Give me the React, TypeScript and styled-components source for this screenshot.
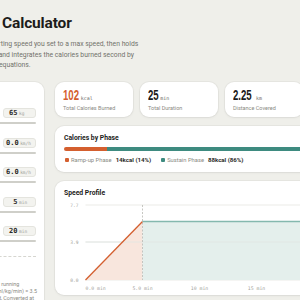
import styled, { createGlobalStyle } from "styled-components";

const GlobalStyle = createGlobalStyle`
    * { box-sizing: border-box; }
    html, body { margin: 0; padding: 0; background: #efefea; }
    body {
        font-family: Roboto, "Noto Sans", sans-serif;
        color: #1c1c1a;
        overflow: hidden;
    }
`;

const ORANGE = "#d45f2f";
const TEAL = "#3e8b80";

const Page = styled.div`
    display: flex;
    justify-content: center;
    width: 100vw;
`;

const Shell = styled.div`
    flex: none;
    width: 476px;
`;

const Header = styled.header`
    padding-top: 2px;
`;

const Eyebrow = styled.div`
    font-size: 5.5px;
    line-height: 7px;
    letter-spacing: 0.14em;
    text-transform: uppercase;
    color: #a3a39c;
`;

const Title = styled.h1`
    margin: 3px 0 0;
    font-size: 15.5px;
    line-height: 22px;
    font-weight: 700;
    letter-spacing: -0.01em;
`;

const Lead = styled.p`
    margin: 5px 0 0;
    font-size: 6.8px;
    line-height: 10.5px;
    color: #72726b;
`;

const Main = styled.div`
    display: grid;
    grid-template-columns: 132px 1fr;
    gap: 11px;
    margin-top: 11.5px;
`;

const Card = styled.section`
    background: #ffffff;
    border-radius: 9px;
    box-shadow: 0 0 0 1px rgba(0, 0, 0, 0.035), 0 1px 3px rgba(0, 0, 0, 0.05);
`;

const Panel = styled(Card)`
    display: flex;
    flex-direction: column;
    padding: 8px 8px 12px;
`;

const PanelTitle = styled.h2`
    margin: 0 0 9px;
    font-size: 7px;
    line-height: 9px;
    font-weight: 700;
`;

const Fields = styled.div`
    display: flex;
    flex-direction: column;
    gap: 13.5px;
`;

const Field = styled.div`
    display: flex;
    flex-direction: column;
    gap: 4px;
`;

const FieldRow = styled.div`
    display: flex;
    align-items: center;
    justify-content: space-between;
    height: 10px;
`;

const FieldLabel = styled.span`
    font-size: 6px;
    color: #55554f;
`;

const ValueBox = styled.div`
    display: flex;
    align-items: baseline;
    justify-content: flex-end;
    width: 33px;
    height: 10px;
    padding: 0 4px;
    line-height: 9px;
    background: #f3f3ef;
    border: 1px solid #e4e4de;
    border-radius: 3px;
    font-family: "DejaVu Sans Mono", "Liberation Mono", monospace;
`;

const Value = styled.span`
    font-size: 7px;
    font-weight: 700;
    color: #2a2a27;
`;

const Unit = styled.span`
    width: 12px;
    margin-left: 1.5px;
    font-size: 4.5px;
    color: #a0a09a;
`;

const Track = styled.div`
    position: relative;
    height: 2px;
    border-radius: 1px;
    background: #cfcfc9;
`;

const TrackFill = styled.div`
    height: 100%;
    border-radius: 1px;
    background: #8f8f88;
`;

const Thumb = styled.div`
    position: absolute;
    top: -3px;
    width: 8px;
    height: 8px;
    margin-left: -4px;
    border-radius: 50%;
    background: #ffffff;
    border: 1.5px solid #3a3a36;
`;

const Divider = styled.div`
    height: 0;
    margin-top: 14px;
    border-top: 1px dashed #d6d6d0;
`;

const Notes = styled.div`
    display: flex;
    flex-direction: column;
    margin-top: 12px;
`;

const NoteTitle = styled.div`
    font-size: 6px;
    line-height: 8px;
    font-weight: 700;
    color: #55554f;
    margin-bottom: 4px;
`;

const NoteLine = styled.div`
    font-size: 5.4px;
    line-height: 7px;
    white-space: nowrap;
    color: #8a8a83;
`;

const Column = styled.div`
    display: flex;
    flex-direction: column;
    gap: 8.5px;
`;

const Stats = styled.div`
    display: grid;
    grid-template-columns: repeat(4, 1fr);
    gap: 7px;
`;

const StatCard = styled(Card)`
    height: 35px;
    padding: 6px 8px 0;
`;

const StatValue = styled.div`
    display: flex;
    align-items: baseline;
    gap: 1.5px;
    line-height: 14px;
`;

const Figure = styled.span`
    display: inline-block;
    white-space: nowrap;
`;

const Big = styled.span<{ $accent?: boolean }>`
    display: inline-block;
    font-family: "Liberation Sans", Arial, sans-serif;
    font-size: 15.5px;
    font-weight: 700;
    transform: scaleX(0.62);
    transform-origin: left center;
    color: ${(p) => (p.$accent ? ORANGE : "#1c1c1a")};
`;

const Small = styled.span`
    font-family: "DejaVu Sans Mono", "Liberation Mono", monospace;
    font-size: 5px;
    color: #6c6c66;
`;

const StatLabel = styled.div`
    font-size: 5.5px;
    line-height: 7px;
    color: #8a8a83;
`;

const BlockCard = styled(Card)`
    padding: 8px 9px;
`;

const BlockTitle = styled.h3`
    margin: 0;
    font-size: 6.8px;
    line-height: 9px;
    font-weight: 700;
`;

const Bar = styled.div`
    display: flex;
    height: 4.5px;
    margin-top: 4px;
    border-radius: 2px;
    overflow: hidden;
`;

const BarPart = styled.div<{ $color: string }>`
    background: ${(p) => p.$color};
`;

const Legend = styled.div`
    display: flex;
    align-items: center;
    gap: 9px;
    margin-top: 5px;
    line-height: 8px;
`;

const LegendItem = styled.div`
    display: flex;
    align-items: center;
    gap: 2.5px;
`;

const Swatch = styled.span<{ $color: string }>`
    width: 3.5px;
    height: 3.5px;
    margin-left: 1px;
    border-radius: 1px;
    background: ${(p) => p.$color};
`;

const LegendName = styled.span`
    font-size: 5.8px;
    color: #8a8a83;
`;

const LegendValue = styled.span`
    margin-left: 1.5px;
    font-size: 6.1px;
    font-weight: 700;
    color: #2a2a27;
`;

const ChartCard = styled(Card)`
    padding: 8px 9px 2px;
`;

const Chart = styled.svg`
    display: block;
    width: 100%;
    height: 93px;
    margin-top: 2px;
    font-family: "DejaVu Sans Mono", "Liberation Mono", monospace;
`;

const fields = [
    { label: "Body weight", value: "65", unit: "kg", pct: 28 },
    { label: "Start speed", value: "0.0", unit: "km/h", pct: 0 },
    { label: "Max speed", value: "6.0", unit: "km/h", pct: 24 },
    { label: "Ramp-up time", value: "5", unit: "min", pct: 12 },
    { label: "Sustain time", value: "20", unit: "min", pct: 20 },
];

const stats = [
    { value: "102", unit: "kcal", label: "Total Calories Burned", accent: true },
    { value: "25", unit: "min", label: "Total Duration" },
    { value: "2.25", unit: "km", label: "Distance Covered" },
    { value: "4.1", unit: "kcal/min", label: "Average Burn Rate" },
];

const notes = [
    "Per ACSM metabolic equation for running",
    "at 0% grade on a treadmill: VO₂ (ml/kg/min) = 3.5",
    "+ 0.2 × speed (m/min) per second, Converted at",
    "5 kcal per litre of O₂ consumed.",
];

// chart scale: 25 min on x, 7.7 km/h on y
const X0 = 21;
const PX_PER_MIN = 11.4;
const Y_TOP = 5;
const Y_BOTTOM = 80;
const Y_MAX = 7.7;
const xAt = (m: number) => X0 + m * PX_PER_MIN;
const yAt = (v: number) => Y_BOTTOM - (v / Y_MAX) * (Y_BOTTOM - Y_TOP);

function SpeedChart() {
    const rampEnd = xAt(5);
    const end = xAt(25);
    const top = yAt(6);
    const ticks = [0, 5, 10, 15, 20, 25];
    const levels = [7.7, 3.9, 0];

    return (
        <Chart viewBox="0 0 314 93">
            {levels.map((v) => (
                <g key={v}>
                    <line x1={X0} x2={end} y1={yAt(v)} y2={yAt(v)} stroke="#ebebe7" strokeWidth="1" />
                    <text x={14} y={yAt(v) + 1.6} fontSize="4.6" fill="#a3a39c" textAnchor="end">
                        {v.toFixed(1)}
                    </text>
                </g>
            ))}
            <polygon points={`${X0},${Y_BOTTOM} ${rampEnd},${top} ${rampEnd},${Y_BOTTOM}`} fill="#f8e6dd" />
            <rect x={rampEnd} y={top} width={end - rampEnd} height={Y_BOTTOM - top} fill="#e4efec" />
            <line x1={X0} x2={end} y1={yAt(3.9)} y2={yAt(3.9)} stroke="#dfe6e3" strokeWidth="0.8" />
            <line x1={rampEnd} x2={rampEnd} y1={Y_TOP} y2={Y_BOTTOM} stroke="#b9b9b3" strokeWidth="0.8" strokeDasharray="2 1.5" />
            <line x1={X0} y1={Y_BOTTOM} x2={rampEnd} y2={top} stroke={ORANGE} strokeWidth="1.3" />
            <line x1={rampEnd} y1={top} x2={end} y2={top} stroke="#84b8ae" strokeWidth="1.6" />
            {ticks.map((m, i) => (
                <text
                    key={m}
                    x={xAt(m)}
                    y={90}
                    fontSize="4.8"
                    fill="#a3a39c"
                    textAnchor={i === 0 ? "start" : i === ticks.length - 1 ? "end" : "middle"}
                >
                    {m < 10 ? `${m.toFixed(1)} min` : `${m} min`}
                </text>
            ))}
        </Chart>
    );
}

function App() {
    return (
        <>
            <GlobalStyle />
            <Page>
                <Shell>
                    <Header>
                        <Eyebrow>Fitness · Kcal Estimator</Eyebrow>
                        <Title>Speed Ramp Calculator</Title>
                        <Lead>
                            Ramps up linearly from a starting speed you set to a max speed, then holds
                            <br />
                            it for the duration you prefer, and integrates the calories burned second by
                            <br />
                            second using ACSM running equations.
                        </Lead>
                    </Header>
                    <Main>
                        <Panel>
                            <PanelTitle>Inputs</PanelTitle>
                            <Fields>
                                {fields.map((f) => (
                                    <Field key={f.label}>
                                        <FieldRow>
                                            <FieldLabel>{f.label}</FieldLabel>
                                            <ValueBox>
                                                <Value>{f.value}</Value>
                                                <Unit>{f.unit}</Unit>
                                            </ValueBox>
                                        </FieldRow>
                                        <Track>
                                            <TrackFill style={{ width: `${f.pct}%` }} />
                                            <Thumb style={{ left: `${f.pct}%` }} />
                                        </Track>
                                    </Field>
                                ))}
                            </Fields>
                            <Divider />
                            <Notes>
                                <NoteTitle>Method</NoteTitle>
                                {notes.map((n) => (
                                    <NoteLine key={n}>{n}</NoteLine>
                                ))}
                            </Notes>
                        </Panel>
                        <Column>
                            <Stats>
                                {stats.map((s) => (
                                    <StatCard key={s.label}>
                                        <StatValue>
                                            <Figure style={{ width: `${s.value.length * 5.4}px` }}>
                                                <Big $accent={s.accent}>{s.value}</Big>
                                            </Figure>
                                            <Small>{s.unit}</Small>
                                        </StatValue>
                                        <StatLabel>{s.label}</StatLabel>
                                    </StatCard>
                                ))}
                            </Stats>
                            <BlockCard>
                                <BlockTitle>Calories by Phase</BlockTitle>
                                <Bar>
                                    <BarPart $color={ORANGE} style={{ width: `${(14 / 102) * 100}%` }} />
                                    <BarPart $color={TEAL} style={{ width: `${(88 / 102) * 100}%` }} />
                                </Bar>
                                <Legend>
                                    <LegendItem>
                                        <Swatch $color={ORANGE} />
                                        <LegendName>Ramp-up Phase</LegendName>
                                        <LegendValue>14kcal (14%)</LegendValue>
                                    </LegendItem>
                                    <LegendItem>
                                        <Swatch $color={TEAL} />
                                        <LegendName>Sustain Phase</LegendName>
                                        <LegendValue>88kcal (86%)</LegendValue>
                                    </LegendItem>
                                </Legend>
                            </BlockCard>
                            <ChartCard>
                                <BlockTitle>Speed Profile</BlockTitle>
                                <SpeedChart />
                            </ChartCard>
                        </Column>
                    </Main>
                </Shell>
            </Page>
        </>
    );
}

export default App;
